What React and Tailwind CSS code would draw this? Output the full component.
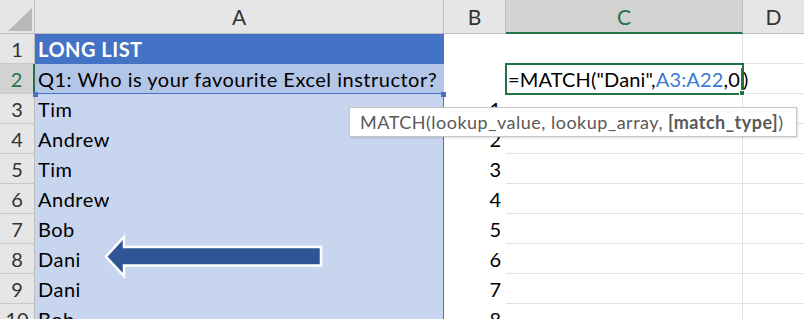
import React from "react";

const rows = [
  { n: 1, a: "LONG LIST" },
  { n: 2, a: "Q1: Who is your favourite Excel instructor?" },
  { n: 3, a: "Tim", b: 1 },
  { n: 4, a: "Andrew", b: 2 },
  { n: 5, a: "Tim", b: 3 },
  { n: 6, a: "Andrew", b: 4 },
  { n: 7, a: "Bob", b: 5 },
  { n: 8, a: "Dani", b: 6 },
  { n: 9, a: "Dani", b: 7 },
  { n: 10, a: "Bob", b: 8 },
];

function Arrow() {
  return (
    <svg
      className="absolute left-0 top-0 pointer-events-none"
      width="804"
      height="319"
      viewBox="0 0 804 319"
    >
      <polygon
        points="106,256.5 124,237 124,247 321,247 321,265.5 124,265.5 124,276"
        fill="#2f5597"
        stroke="#ffffff"
        strokeWidth="2.5"
        strokeLinejoin="miter"
      />
    </svg>
  );
}

function Cell({ row }) {
  const sel = row.n === 2;
  let aCls = "bg-[#c8d5ee] text-black";
  if (row.n === 1) aCls = "bg-[#4472c4] text-white font-bold";
  if (row.n === 2) aCls = "bg-[#b4c6e7] text-black";
  const inRange = row.n >= 3;

  return (
    <div className="flex h-[30px]">
      <div
        className={
          "w-[35px] shrink-0 flex items-center justify-center border-b border-[#c8c8c8] " +
          (sel
            ? "bg-[#d2d2d2] text-[#217346] border-r-2 border-r-[#217346]"
            : "bg-[#e6e6e6] text-[#333] border-r border-r-[#bdbdbd]")
        }
      >
        {row.n}
      </div>
      <div
        className={
          "w-[409px] shrink-0 flex items-center pl-[3px] whitespace-nowrap tracking-[0.5px] " +
          aCls +
          (inRange ? " border-r border-[#4472c4]" : "") +
          (row.n === 2 ? " border-b border-[#4472c4]" : "")
        }
      >
        {row.a}
      </div>
      <div className="w-[62px] shrink-0 flex items-center justify-end pr-[5px] bg-white text-black">
        {row.b}
      </div>
      <div
        className={
          "relative w-[237px] shrink-0 flex items-center border-r border-b border-[#e1e1e1] " +
          (sel ? "outline-2 outline-[#217346] -outline-offset-1 z-10" : "")
        }
      >
        {sel && (
          <>
            <span className="absolute left-[2px] top-0 h-full flex items-center whitespace-nowrap text-black tracking-[0.15px]">
              =MATCH("Dani",<span className="text-[#3a79d4]">A3:A22</span>,0
              <span className="inline-block w-px h-[22px] bg-[#555] mx-px" />)
            </span>
            <span className="absolute right-[-3px] bottom-[-3px] w-[6px] h-[6px] bg-[#217346] border border-white" />
          </>
        )}
      </div>
      <div className="flex-1 border-b border-[#e1e1e1]" />
    </div>
  );
}

export default function App() {
  return (
    <div
      className="relative w-[804px] h-[319px] overflow-hidden bg-white text-[20px] leading-none"
      style={{ fontFamily: "Lato, 'Noto Sans', sans-serif" }}
    >
      <div className="flex h-[34px] text-[21px]">
        <div className="relative w-[35px] shrink-0 bg-[#e6e6e6] border-r border-b border-[#bdbdbd]">
          <svg className="absolute left-0 top-0" width="34" height="33">
            <polygon points="8,31 32,31 32,8" fill="#b9b9b9" />
          </svg>
        </div>
        <div className="w-[409px] shrink-0 flex items-center justify-center bg-[#e6e6e6] text-[#333] border-r border-b border-[#bdbdbd]">
          A
        </div>
        <div className="w-[62px] shrink-0 flex items-center justify-center bg-[#e6e6e6] text-[#333] border-r border-b border-[#bdbdbd]">
          B
        </div>
        <div className="w-[237px] shrink-0 flex items-center justify-center bg-[#d2d2d2] text-[#217346] border-r border-r-[#bdbdbd] border-b-2 border-b-[#217346]">
          C
        </div>
        <div className="flex-1 flex items-center justify-center bg-[#e6e6e6] text-[#333] border-b border-[#bdbdbd]">
          D
        </div>
      </div>

      {rows.map((r) => (
        <Cell key={r.n} row={r} />
      ))}

      {/* range corner handles */}
      <span className="absolute left-[33px] top-[92px] w-[5px] h-[5px] bg-[#4472c4]" />
      <span className="absolute left-[441px] top-[92px] w-[5px] h-[5px] bg-[#4472c4]" />

      {/* function tooltip */}
      <div className="absolute left-[349px] top-[107px] w-[448px] h-[30px] flex items-center pl-[10px] bg-white border border-[#c6c6c6] shadow-[1px_1px_2px_rgba(0,0,0,0.15)] text-[18px] tracking-[0.5px] text-[#595959] whitespace-nowrap z-20">
        MATCH(lookup_value, lookup_array, <span className="font-bold ml-[5px]">[match_type]</span>)
      </div>

      <Arrow />
    </div>
  );
}
